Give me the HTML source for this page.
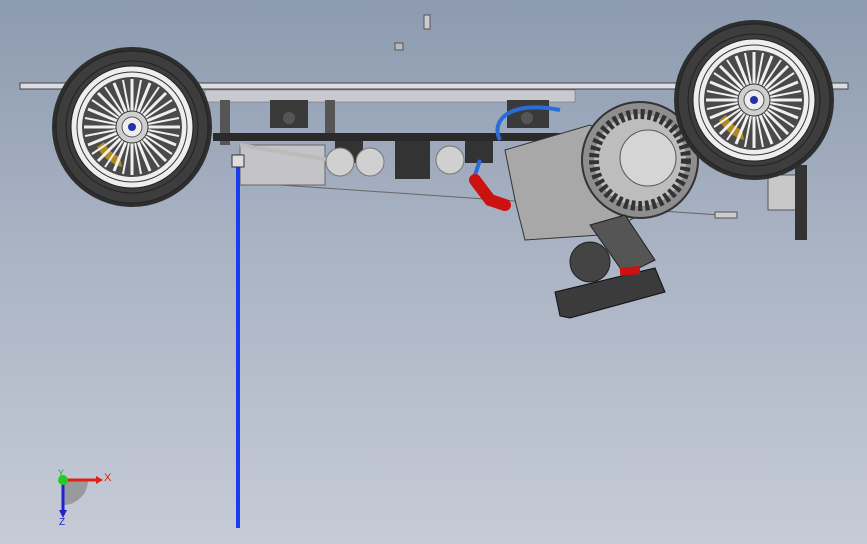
<!DOCTYPE html>
<html><head><meta charset="utf-8"><style>
html,body{margin:0;padding:0;width:867px;height:544px;overflow:hidden}
body{background:linear-gradient(180deg,#8d9bb0 0%,#a9b3c4 45%,#c6cbd6 100%)}
svg{position:absolute;left:0;top:0}
text{font-family:"Liberation Sans",sans-serif}
</style></head><body>
<svg width="867" height="544" viewBox="0 0 867 544">
<defs>
<g id="spokes">
<g stroke="#f0f0f0" stroke-width="3">
<line x1="0" y1="-48" x2="0" y2="48"/><line x1="-48" y1="0" x2="48" y2="0"/>
<line x1="-34" y1="-34" x2="34" y2="34"/><line x1="-34" y1="34" x2="34" y2="-34"/>
<line x1="-18" y1="-44" x2="18" y2="44"/><line x1="-44" y1="-18" x2="44" y2="18"/>
<line x1="-18" y1="44" x2="18" y2="-44"/><line x1="-44" y1="18" x2="44" y2="-18"/>
<line x1="-9" y1="-47" x2="9" y2="47" stroke-width="2"/><line x1="-47" y1="-9" x2="47" y2="9" stroke-width="2"/>
<line x1="-9" y1="47" x2="9" y2="-47" stroke-width="2"/><line x1="-47" y1="9" x2="47" y2="-9" stroke-width="2"/>
<line x1="-27" y1="-40" x2="27" y2="40" stroke-width="2"/><line x1="-40" y1="-27" x2="40" y2="27" stroke-width="2"/>
<line x1="-27" y1="40" x2="27" y2="-40" stroke-width="2"/><line x1="-40" y1="27" x2="40" y2="-27" stroke-width="2"/>
</g>
</g>
<g id="wheel">
<circle r="80" fill="#2e2e2e"/>
<circle r="76" fill="#3d3d3d" stroke="#222" stroke-width="1"/>
<circle r="66" fill="none" stroke="#222" stroke-width="1"/>
<circle r="61" fill="#eeeeee" stroke="#222" stroke-width="1"/>
<circle r="55" fill="none" stroke="#333" stroke-width="1"/>
<circle r="50" fill="#4a4a4a"/>
<path d="M-35 20 A40 40 0 0 0 -10 40 L-12 30 A30 30 0 0 1 -28 15 Z" fill="#b08a20"/>
<use href="#spokes"/>
<circle r="16" fill="#cfcfcf" stroke="#333" stroke-width="1"/>
<circle r="10" fill="#eee" stroke="#555" stroke-width="1"/>
<circle r="4" fill="#2233aa"/>
</g>
</defs>
<!-- small parts top -->
<rect x="424" y="15" width="6" height="14" fill="#ccc" stroke="#555"/>
<rect x="395" y="43" width="8" height="7" fill="#bbb" stroke="#555"/>
<!-- chassis plate -->
<rect x="20" y="83" width="828" height="6" fill="#dcdde3" stroke="#444" stroke-width="1"/>
<!-- under structure -->
<rect x="205" y="90" width="370" height="12" fill="#c9cad0" stroke="#666" stroke-width="0.5"/>
<rect x="220" y="100" width="10" height="45" fill="#555"/>
<rect x="325" y="100" width="10" height="35" fill="#555"/>
<rect x="270" y="100" width="38" height="28" fill="#3a3a3a"/>
<circle cx="289" cy="118" r="6" fill="#555"/>
<rect x="507" y="100" width="42" height="28" fill="#3a3a3a"/>
<circle cx="527" cy="118" r="6" fill="#555"/>
<rect x="213" y="133" width="350" height="8" fill="#2a2a2a"/>
<rect x="335" y="141" width="28" height="22" fill="#333"/>
<rect x="395" y="141" width="35" height="38" fill="#333"/>
<rect x="465" y="141" width="28" height="22" fill="#333"/>
<rect x="240" y="145" width="85" height="40" fill="#c4c4c8" stroke="#666"/>
<line x1="240" y1="145" x2="330" y2="160" stroke="#bbb" stroke-width="4"/>
<circle cx="340" cy="162" r="14" fill="#d0d0d0" stroke="#777"/>
<circle cx="370" cy="162" r="14" fill="#d0d0d0" stroke="#777"/>
<circle cx="450" cy="160" r="14" fill="#d0d0d0" stroke="#777"/>
<line x1="280" y1="185" x2="720" y2="215" stroke="#666"/>
<!-- blue hose -->
<path d="M500 140 C490 120 510 100 560 110" stroke="#2a6dd8" stroke-width="4" fill="none"/>
<path d="M475 175 L480 160" stroke="#2a6dd8" stroke-width="4"/>
<path d="M475 180 L490 200 L505 205" stroke="#cc1111" stroke-width="12" fill="none" stroke-linecap="round"/>
<!-- engine block -->
<path d="M505 150 L590 125 L640 150 L640 215 L600 235 L525 240 L515 200 Z" fill="#a8a8a8" stroke="#333"/>
<circle cx="640" cy="160" r="58" fill="#8e8e8e" stroke="#333" stroke-width="2"/>
<circle cx="640" cy="160" r="46" fill="#bdbdbd" stroke="#333" stroke-dasharray="4 3" stroke-width="10"/>
<circle cx="648" cy="158" r="28" fill="#d5d5d5" stroke="#555"/>
<!-- gear / pipe -->
<path d="M590 225 L625 215 L655 260 L625 275 Z" fill="#555" stroke="#222"/>
<circle cx="590" cy="262" r="20" fill="#444" stroke="#222"/>
<path d="M555 292 L655 268 L665 292 L570 318 L560 316 Z" fill="#3b3b3b" stroke="#111"/>
<path d="M620 272 L640 270" stroke="#cc1111" stroke-width="8"/>
<!-- right rear parts -->
<rect x="768" y="175" width="35" height="35" fill="#c8c8c8" stroke="#555"/>
<rect x="795" y="165" width="12" height="75" fill="#333"/>
<rect x="715" y="212" width="22" height="6" fill="#ccc" stroke="#555"/>
<!-- wheels -->
<g transform="translate(132,127)"><use href="#wheel"/></g>
<g transform="translate(754,100)"><use href="#wheel"/></g>
<!-- blue axis line -->
<rect x="236" y="162" width="4" height="366" fill="#1a3cef"/>
<rect x="232" y="155" width="12" height="12" fill="#ddd" stroke="#333"/>
<!-- triad -->
<path d="M63 480 L63 505 A25 25 0 0 0 88 480 Z" fill="#888" opacity="0.7"/>
<line x1="63" y1="480" x2="96" y2="480" stroke="#d21" stroke-width="3"/>
<path d="M96 476 L103 480 L96 484 Z" fill="#d21"/>
<line x1="63" y1="480" x2="63" y2="512" stroke="#22c" stroke-width="3"/>
<path d="M59 510 L63 518 L67 510 Z" fill="#22c"/>
<circle cx="63" cy="480" r="5" fill="#2c2"/>
<text x="104" y="481" font-size="11" fill="#d21">X</text>
<text x="58" y="476" font-size="9" fill="#2a2">Y</text>
<text x="59" y="525" font-size="10" fill="#22c">Z</text>
</svg>
</body></html>
